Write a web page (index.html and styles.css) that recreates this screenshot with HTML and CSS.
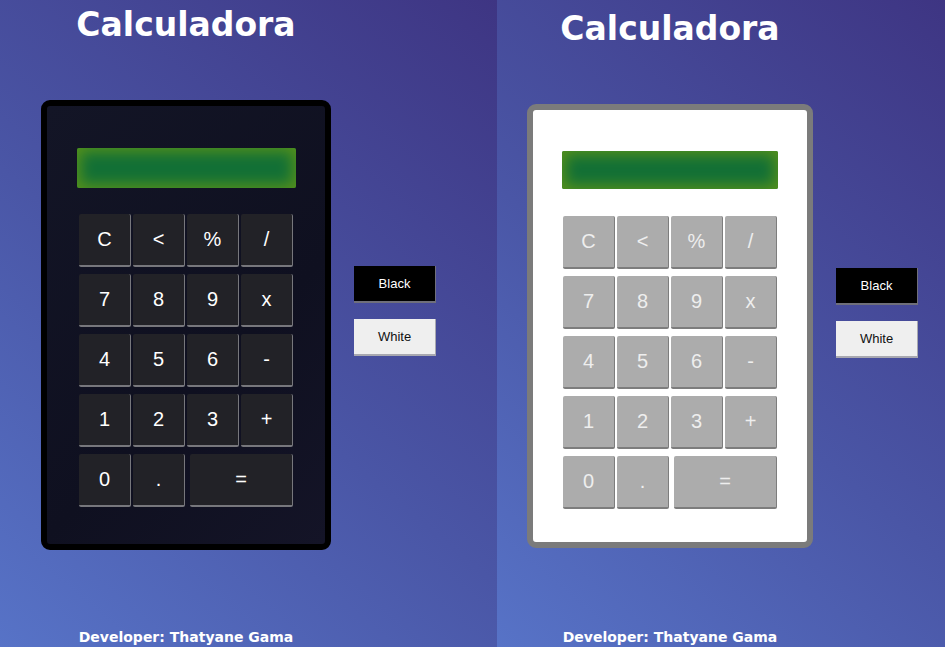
FILE: index.html
```html
<!DOCTYPE html>
<html lang="pt">
<head>
<meta charset="utf-8">
<title>Calculadora</title>
<link rel="stylesheet" href="styles.css">
</head>
<body>
<div class="screens">
  <section class="panel panel-dark">
    <div class="column">
      <h1 class="title">Calculadora</h1>
      <div class="calc">
        <div class="display"></div>
        <div class="keys">
          <button class="key">C</button><button class="key">&lt;</button><button class="key">%</button><button class="key">/</button>
          <button class="key">7</button><button class="key">8</button><button class="key">9</button><button class="key">x</button>
          <button class="key">4</button><button class="key">5</button><button class="key">6</button><button class="key">-</button>
          <button class="key">1</button><button class="key">2</button><button class="key">3</button><button class="key">+</button>
          <button class="key">0</button><button class="key">.</button><button class="key key-wide">=</button>
        </div>
      </div>
      <p class="footer">Developer: Thatyane Gama</p>
    </div>
    <div class="themes">
      <button class="theme theme-black">Black</button>
      <button class="theme theme-white">White</button>
    </div>
  </section>
  <section class="panel panel-light">
    <div class="column">
      <h1 class="title">Calculadora</h1>
      <div class="calc">
        <div class="display"></div>
        <div class="keys">
          <button class="key">C</button><button class="key">&lt;</button><button class="key">%</button><button class="key">/</button>
          <button class="key">7</button><button class="key">8</button><button class="key">9</button><button class="key">x</button>
          <button class="key">4</button><button class="key">5</button><button class="key">6</button><button class="key">-</button>
          <button class="key">1</button><button class="key">2</button><button class="key">3</button><button class="key">+</button>
          <button class="key">0</button><button class="key">.</button><button class="key key-wide">=</button>
        </div>
      </div>
      <p class="footer">Developer: Thatyane Gama</p>
    </div>
    <div class="themes">
      <button class="theme theme-black">Black</button>
      <button class="theme theme-white">White</button>
    </div>
  </section>
</div>
</body>
</html>
```

FILE: styles.css
```css
* { box-sizing: border-box; }
html, body { margin: 0; padding: 0; }
body { width: 945px; height: 647px; overflow: hidden; font-family: "DejaVu Sans", Verdana, sans-serif; }

.screens { display: flex; height: 647px; }

.panel {
  height: 647px;
  display: flex;
  align-items: flex-start;
  background: linear-gradient(40deg, #5773c7 0%, #4a56a6 45%, #3e3583 100%);
}
.panel-dark { width: 497px; padding-left: 41px; }
.panel-light { width: 448px; padding-left: 30px; }

.column { display: flex; flex-direction: column; align-items: center; }
.panel-dark .column { width: 290px; }
.panel-light .column { width: 286px; }

.title {
  margin: 0;
  color: #fff;
  font-size: 33px;
  font-weight: bold;
  line-height: 37px;
}
.panel-dark .title { margin-top: 6px; }
.panel-light .title { margin-top: 10px; }

.calc {
  display: flex;
  flex-direction: column;
  align-items: center;
  border-style: solid;
  border-width: 6px;
  border-radius: 9px;
}
.panel-dark .calc {
  width: 290px; height: 450px; margin-top: 57px;
  border-color: #000;
  background: linear-gradient(135deg, #131526 0%, #0f1020 60%, #141427 100%);
  padding-top: 42px;
}
.panel-light .calc {
  width: 286px; height: 444px; margin-top: 57px;
  border-color: #7b7b7b;
  background: #fff;
  padding-top: 41px;
}

.display {
  border-radius: 2px;
  background: #137036;
  box-shadow: inset 0 0 14px 4px #54901c;
}
.panel-dark .display { width: 219px; height: 40px; }
.panel-light .display { width: 216px; height: 38px; }

.keys {
  display: grid;
  grid-template-columns: repeat(4, 52px);
  grid-auto-rows: 53px;
  column-gap: 2px;
  row-gap: 7px;
  margin-top: 26px;
}
.panel-light .keys { margin-top: 27px; }

.key {
  margin: 0;
  padding: 0;
  font-family: "Liberation Sans", Arial, sans-serif;
  font-size: 20px;
  border: none;
  border-radius: 2px;
  border-right: 1px solid;
  border-bottom: 2px solid;
}
.key-wide { grid-column: span 2; margin-left: 3px; }

.panel-dark .key {
  background: #222227;
  color: #fff;
  border-color: #77777c;
}
.panel-light .key {
  background: #acacac;
  color: #eeeeee;
  border-color: #7d7d7d;
}

.footer {
  margin: 0;
  color: #fff;
  font-size: 14px;
  font-weight: bold;
  line-height: 16px;
}
.panel-dark .footer { margin-top: 79px; }
.panel-light .footer { margin-top: 81px; }

.themes { display: flex; flex-direction: column; gap: 16px; }
.panel-dark .themes { margin-left: 23px; margin-top: 266px; }
.panel-light .themes { margin-left: 23px; margin-top: 268px; }

.theme {
  width: 82px;
  height: 37px;
  margin: 0;
  padding: 0;
  font-family: "Liberation Sans", Arial, sans-serif;
  font-size: 13px;
  border: none;
  border-right: 1px solid #6f6f7a;
  border-bottom: 2px solid #6f6f7a;
}
.theme-black { background: #000; color: #fff; }
.theme-white { background: #efefef; color: #111; border-color: #a8a8b0; }
```
